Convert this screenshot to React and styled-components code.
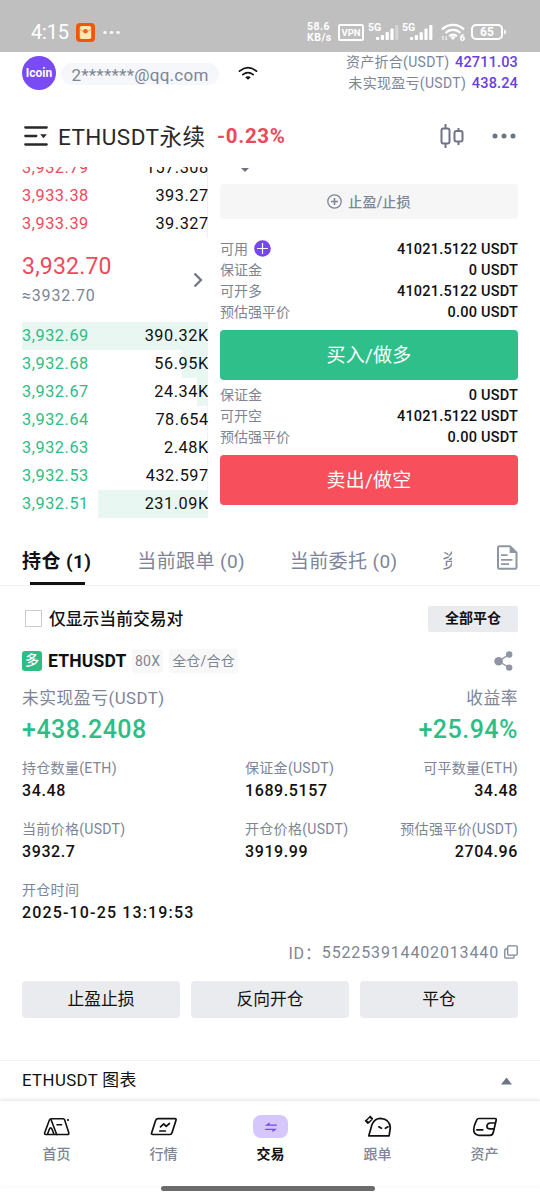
import React from "react";
import styled, { createGlobalStyle, css } from "styled-components";

const asks = [
	{ price: "3,932.79", amount: "157.308", depth: 0.5 },
	{ price: "3,933.38", amount: "393.27", depth: 0.5 },
	{ price: "3,933.39", amount: "39.327", depth: 0.5 },
];

const bids = [
	{ price: "3,932.69", amount: "390.32K", depth: 100 },
	{ price: "3,932.68", amount: "56.95K", depth: 14 },
	{ price: "3,932.67", amount: "24.34K", depth: 6 },
	{ price: "3,932.64", amount: "78.654", depth: 0.5 },
	{ price: "3,932.63", amount: "2.48K", depth: 0.7 },
	{ price: "3,932.53", amount: "432.597", depth: 0.5 },
	{ price: "3,932.51", amount: "231.09K", depth: 59 },
];

const details = [
	["持仓数量(ETH)", "34.48"],
	["保证金(USDT)", "1689.5157"],
	["可平数量(ETH)", "34.48"],
	["当前价格(USDT)", "3932.7"],
	["开仓价格(USDT)", "3919.99"],
	["预估强平价(USDT)", "2704.96"],
	["开仓时间", "2025-10-25 13:19:53"],
];

const Signal = ({ weak }) => (
	<svg width="23" height="17" viewBox="0 0 23 17" fill="#fff">
		<rect x="0" y="13" width="3.2" height="3" rx="1" />
		<rect x="4.8" y="11" width="3.2" height="5" rx="1" />
		<rect x="9.6" y="8" width="3.2" height="8" rx="1" />
		<rect x="14.4" y="4.500" width="3.2" height="11.500" rx="1" />
		<rect x="19.2" y="1" width="3.2" height="15" rx="1" opacity={weak ? 0.35 : 1} />
	</svg>
);

const PacketIcon = () => (
	<svg width="19" height="19" viewBox="0 0 19 19">
		<rect width="19" height="19" rx="4" fill="#f0560e" />
		<rect x="3.800" y="3" width="11.400" height="13" rx="1.8" fill="#ffe9b0" />
		<path d="M4 6.5q5.500 4 11 0" fill="none" stroke="#f0a050" strokeWidth="1" />
		<circle cx="9.500" cy="8.300" r="2.300" fill="#e8622a" />
	</svg>
);

const StatusWifi = () => (
	<svg width="24" height="20" viewBox="0 0 24 20" fill="none" stroke="#fff" strokeWidth="2.2">
		<path d="M1 7.500a15.500 15.500 0 0 1 22 0" />
		<path d="M4.500 11a10.500 10.500 0 0 1 15 0" />
		<path d="M8 14.300a5.700 5.700 0 0 1 8 0" />
		<path d="M9.300 15.200a4 4 0 0 1 5.400 0L12 18z" fill="#fff" stroke="none" />
		<path d="M2 14v4M.8 15.200L2 14M5 14v4M5 18l1.200-1.200" strokeWidth=".9" />
	</svg>
);

const HeaderWifi = () => (
	<svg width="20" height="15" viewBox="0 0 20 15" fill="none" stroke="#111" strokeLinecap="round">
		<path d="M1.500 5.200q8.500-7 17 0" strokeWidth="1.700" />
		<path d="M4.800 8.700q5.200-4 10.400 0" strokeWidth="1.700" />
		<path d="M7.200 11.200q2.800-1.900 5.600 0L10 13.800z" fill="#111" stroke="none" />
	</svg>
);

const ListIcon = () => (
	<svg width="24" height="20" viewBox="0 0 24 20" stroke="#292929" strokeWidth="2.300" strokeLinecap="round">
		<path d="M1.300 1.500h21.400M1.300 10h11M1.300 18.500h21.400" />
		<path d="M16.200 8.200h6.600L19.500 12.200z" fill="#292929" stroke="none" />
	</svg>
);

const CandleIcon = () => (
	<svg width="24" height="26" viewBox="0 0 24 26" fill="none" stroke="#6d7486" strokeWidth="2">
		<rect x="1.500" y="5.500" width="8" height="15" rx="2" />
		<rect x="14.500" y="8" width="8" height="10.500" rx="2" />
		<path d="M5.500 1v4.500M5.500 20.500V25M18.500 5v3M18.500 18.500V22" />
	</svg>
);

const DotsIcon = () => (
	<svg width="26" height="6" viewBox="0 0 26 6" fill="#6d7486">
		<circle cx="3" cy="3" r="2.500" />
		<circle cx="12" cy="3" r="2.500" />
		<circle cx="21" cy="3" r="2.500" />
	</svg>
);

const Chevron = () => (
	<svg width="10" height="16" viewBox="0 0 10 16" fill="none" stroke="#6d7486" strokeWidth="2.200">
		<path d="M1.500 1.500L8 8l-6.500 6.500" />
	</svg>
);

const Plus = () => (
	<svg width="15" height="15" viewBox="0 0 15 15" fill="none" stroke="#7d8596" strokeWidth="1.300">
		<circle cx="7.500" cy="7.500" r="6.700" />
		<path d="M7.500 4v7M4 7.500h7" strokeWidth="1.600" />
	</svg>
);

const PlusFilled = () => (
	<svg width="17" height="17" viewBox="0 0 17 17">
		<circle cx="8.500" cy="8.500" r="8.300" fill="#7447f0" />
		<path d="M8.500 3v11M3 8.500h11" stroke="#fff" strokeWidth="1.200" />
	</svg>
);

const FileIcon = () => (
	<svg width="22" height="25" viewBox="0 0 22 25" fill="none" stroke="#8f95a3" strokeWidth="2" strokeLinejoin="round">
		<path d="M3.500 1.200h10.500L20.500 7.700v14.800q0 1.300-1.300 1.300H3.500q-1.500 0-1.500-1.300V2.700Q2 1.200 3.500 1.200z" />
		<path d="M13.700 1.500v6.500h6.500z" fill="#8f95a3" stroke="none" />
		<path d="M5 10.200h6.500M5 14.800h11.500M5 19.200h8" strokeWidth="1.700" />
	</svg>
);

const ShareIcon = () => (
	<svg width="19" height="20" viewBox="0 0 19 20" fill="#8f95a3" stroke="#8f95a3">
		<path d="M15 3.500L4.500 10.300 15 16.500" fill="none" strokeWidth="1.400" />
		<circle cx="4.600" cy="10.200" r="4.300" stroke="none" />
		<circle cx="15.200" cy="3.500" r="3.200" stroke="none" />
		<circle cx="15.200" cy="16.600" r="3.200" stroke="none" />
	</svg>
);

const CopyIcon = () => (
	<svg width="14" height="14" viewBox="0 0 14 14" fill="none" stroke="#7d8596" strokeWidth="1.300">
		<rect x="3.700" y=".8" width="9.500" height="9.300" rx="1" />
		<path d="M3.500 4H1.800q-1 0-1 1v7.200q0 1 1 1H9q1 0 1-1V10.500" />
	</svg>
);

const HomeIcon = () => (
	<svg width="28" height="20" viewBox="0 0 28 20" fill="none" stroke="#111" strokeWidth="1.600" strokeLinejoin="round" strokeLinecap="round">
		<path d="M8.300 1.700h11.700q1.200 0 1.700 1.200l4 12.700q.5 1.900-1.200 1.900H2.700q-1.500 0-1-1.700L6.400 3q.5-1.300 1.900-1.300z" />
		<path d="M8 2.500l5.700 15M4.500 17.300l1.800-5q1.400-2.800 2.800 0l1.800 5M14 7.800h4.500" />
		<circle cx="25" cy="3" r="1.100" fill="#111" stroke="none" />
	</svg>
);

const MarketIcon = () => (
	<svg width="28" height="20" viewBox="0 0 28 20" fill="none" stroke="#111" strokeWidth="1.700" strokeLinejoin="round" strokeLinecap="round">
		<path d="M8.300 1.700h16.500q1.700 0 1.200 1.600l-4 12.500q-.5 1.700-2 1.700H2.700q-1.600 0-1.100-1.600L5.600 3.500q.7-1.800 2.700-1.800z" />
		<path d="M10.500 9.800l3.200-3 2.500 2.500 3.200-2.800M9.800 14h5.500" />
	</svg>
);

const TradeIcon = () => (
	<svg width="16" height="14" viewBox="0 0 16 14" fill="#7447f0">
		<path d="M2 5.800L6.500 2.200v2.200h7.300v1.400z" />
		<path d="M14 8.700L9.500 12.300V10.100H2.200V8.700z" />
	</svg>
);

const CopyTradeIcon = () => (
	<svg width="28" height="23" viewBox="0 0 28 23" fill="none" stroke="#111" strokeWidth="1.700" strokeLinejoin="round" strokeLinecap="round">
		<path d="M4.800 20.800L8 9.500Q10.500 3.300 16.500 3.300q9.500.6 9.800 9.700l-1.200 7.800z" />
		<path d="M14.800 11.800l2.600 1.500M24 11.800l-2.600 1.500" />
		<path d="M2.300 5.200L5.800 2l2.300 2.200L4.700 7.800zM6 1.200l2.300 2.300M1.500 5.800l2.300 2.400" strokeWidth="1.400" />
	</svg>
);

const WalletIcon = () => (
	<svg width="26" height="20" viewBox="0 0 26 20" fill="none" stroke="#111" strokeWidth="1.700" strokeLinejoin="round" strokeLinecap="round">
		<path d="M7 1.500h16q1.400 0 1.200 1.500l-2.800 12q-.8 3.300-3.300 3.300H6.500Q1.500 17 1.700 12.500 2 8.500 4.500 3.300 5.300 1.500 7 1.500z" />
		<path d="M23.300 6h-5q-3 .3-3.400 3 0 2.700 2.500 2.800h4.500M4.800 12.800h6" />
	</svg>
);

const nav = [
	{ label: "首页", icon: <HomeIcon /> },
	{ label: "行情", icon: <MarketIcon /> },
	{ label: "交易", icon: <TradeIcon />, active: true },
	{ label: "跟单", icon: <CopyTradeIcon /> },
	{ label: "资产", icon: <WalletIcon /> },
];

const BookRow = ({ price, amount, depth, side }) => (
	<Level>
		<Depth $side={side} style={{ width: `${depth}%` }} />
		<Price $side={side}>{price}</Price>
		<Amount>{amount}</Amount>
	</Level>
);

const Info = ({ label, value, extra }) => (
	<InfoRow>
		<InfoLabel>
			<span>{label}</span>
			{extra}
		</InfoLabel>
		<InfoValue>{value}</InfoValue>
	</InfoRow>
);

const App = () => {
	return (
		<Screen>
			<GlobalStyle />
			<StatusBar>
				<Clock>4:15</Clock>
				<PacketIcon />
				<More>···</More>
				<Speed>
					<span>58.6</span>
					<span>KB/s</span>
				</Speed>
				<Vpn>VPN</Vpn>
				<Network>
					<Gen>5G</Gen>
					<Signal weak />
				</Network>
				<Network>
					<Gen>5G</Gen>
					<Signal />
				</Network>
				<WifiBox>
					<StatusWifi />
					<WifiGen>6</WifiGen>
				</WifiBox>
				<Battery>65</Battery>
			</StatusBar>

			<Account>
				<Avatar>Icoin</Avatar>
				<Email>2*******@qq.com</Email>
				<HeaderWifi />
				<Balances>
					<div>
						资产折合(USDT) <b>42711.03</b>
					</div>
					<div>
						未实现盈亏(USDT) <b>438.24</b>
					</div>
				</Balances>
			</Account>

			<PairBar>
				<ListIcon />
				<PairName>ETHUSDT永续</PairName>
				<Change>-0.23%</Change>
				<PairActions>
					<CandleIcon />
					<DotsIcon />
				</PairActions>
			</PairBar>

			<Trade>
				<Book>
					{asks.map((row) => (
						<BookRow key={row.price} side="sell" {...row} />
					))}
					<LastPrice>
						<div>
							<Last>3,932.70</Last>
							<Approx>≈3932.70</Approx>
						</div>
						<Chevron />
					</LastPrice>
					{bids.map((row) => (
						<BookRow key={row.price} side="buy" {...row} />
					))}
				</Book>
				<Form>
					<CaretDown />
					<StopButton>
						<Plus />
						<span>止盈/止损</span>
					</StopButton>
					<Info label="可用" value="41021.5122 USDT" extra={<PlusFilled />} />
					<Info label="保证金" value="0 USDT" />
					<Info label="可开多" value="41021.5122 USDT" />
					<Info label="预估强平价" value="0.00 USDT" />
					<OrderButton $side="buy">买入/做多</OrderButton>
					<Info label="保证金" value="0 USDT" />
					<Info label="可开空" value="41021.5122 USDT" />
					<Info label="预估强平价" value="0.00 USDT" />
					<OrderButton $side="sell">卖出/做空</OrderButton>
				</Form>
			</Trade>

			<Tabs>
				<TabList>
					<Tab $active>持仓 (1)</Tab>
					<Tab>当前跟单 (0)</Tab>
					<Tab>当前委托 (0)</Tab>
					<Tab>资产</Tab>
				</TabList>
				<FileIcon />
			</Tabs>

			<Filter>
				<Checkbox />
				<FilterText>仅显示当前交易对</FilterText>
				<CloseAll>全部平仓</CloseAll>
			</Filter>

			<Position>
				<PositionHead>
					<SideBadge>多</SideBadge>
					<Symbol>ETHUSDT</Symbol>
					<Tag>80X</Tag>
					<Tag>全仓/合仓</Tag>
					<ShareIcon />
				</PositionHead>
				<Profit>
					<div>
						<ProfitLabel>未实现盈亏(USDT)</ProfitLabel>
						<ProfitValue>+438.2408</ProfitValue>
					</div>
					<div>
						<ProfitLabel>收益率</ProfitLabel>
						<ProfitValue>+25.94%</ProfitValue>
					</div>
				</Profit>
				<Details>
					{details.map(([label, value]) => (
						<Detail key={label} $wide={value.length > 12}>
							<dt>{label}</dt>
							<dd>{value}</dd>
						</Detail>
					))}
				</Details>
				<OrderId>
					ID：<span>552253914402013440</span>
					<CopyIcon />
				</OrderId>
				<Actions>
					<Action>止盈止损</Action>
					<Action>反向开仓</Action>
					<Action>平仓</Action>
				</Actions>
			</Position>

			<ChartBar>
				<span>ETHUSDT 图表</span>
				<CaretUp />
			</ChartBar>

			<Nav>
				{nav.map((item) => (
					<NavItem key={item.label} $active={item.active}>
						<NavIcon $active={item.active}>{item.icon}</NavIcon>
						{item.label}
					</NavItem>
				))}
			</Nav>
			<HomeIndicator />
		</Screen>
	);
};

const GlobalStyle = createGlobalStyle`
	* {
		box-sizing: border-box;
	}

	body {
		margin: 0;
		background: #fff;
		font-family: Roboto, "Noto Sans CJK SC", sans-serif;
	}

	button {
		font-family: inherit;
		border: none;
		padding: 0;
	}

	svg {
		flex: none;
		display: block;
	}
`;

const gray = "#7d8596";
const green = "#2ebd85";

const Screen = styled.div`
	width: 540px;
	height: 1200px;
	overflow: hidden;
	display: flex;
	flex-direction: column;
	color: #111;
	white-space: nowrap;

	> * {
		flex: none;
	}
`;

const StatusBar = styled.div`
	height: 52px;
	background: #bfbfbf;
	color: #fff;
	display: flex;
	align-items: center;
	padding: 12px 37px 0 31px;
`;

const Clock = styled.div`
	font-size: 20px;
	width: 45px;
	letter-spacing: -0.2px;
`;

const More = styled.div`
	font-size: 20px;
	font-weight: 700;
	margin-left: 7px;
	letter-spacing: 0.5px;
`;

const Speed = styled.div`
	margin-left: auto;
	margin-right: 5px;
	width: 26px;
	font-size: 10.5px;
	font-weight: 700;
	line-height: 11px;
	letter-spacing: 0.5px;
	display: flex;
	flex-direction: column;
	gap: 0.5px;
`;

const Vpn = styled.div`
	width: 26px;
	height: 17px;
	border: 2px solid #fff;
	border-radius: 2px;
	font-size: 9.5px;
	font-weight: 700;
	line-height: 13px;
	text-align: center;
	margin-right: 4px;
`;

const Network = styled.div`
	width: 31px;
	height: 17px;
	margin-right: 3px;
	display: flex;
	justify-content: flex-end;
	position: relative;
`;

const Gen = styled.span`
	position: absolute;
	left: 0;
	top: -2px;
	font-size: 10.5px;
	font-weight: 700;
	line-height: 11px;
`;

const WifiBox = styled.div`
	margin: 0 6px 0 5px;
	position: relative;
`;

const WifiGen = styled.span`
	position: absolute;
	right: 0;
	bottom: -1px;
	font-size: 9px;
	font-weight: 900;
	line-height: 9px;
`;

const Battery = styled.div`
	width: 32px;
	height: 16px;
	border: 2px solid #fff;
	border-radius: 5px;
	font-size: 12px;
	font-weight: 700;
	line-height: 13px;
	text-align: center;
	position: relative;

	&::after {
		content: "";
		position: absolute;
		right: -5px;
		top: 4px;
		width: 2px;
		height: 4px;
		border-radius: 1px;
		background: #fff;
	}
`;

const Account = styled.div`
	height: 56px;
	display: flex;
	align-items: flex-start;
	padding: 0 22px;

	> svg {
		margin: 14px 0 0 19px;
	}
`;

const Avatar = styled.div`
	width: 34px;
	height: 34px;
	margin-top: 4px;
	border-radius: 50%;
	background: #7a4af5;
	color: #fff;
	font-size: 12px;
	font-weight: 700;
	line-height: 34px;
	text-align: center;
`;

const Email = styled.div`
	margin: 11px 0 0 5px;
	width: 158px;
	height: 22px;
	border-radius: 11px;
	background: #f5f7fa;
	color: ${gray};
	font-size: 17px;
	line-height: 24px;
	letter-spacing: 0.25px;
	text-align: center;
`;

const Balances = styled.div`
	margin-left: auto;
	text-align: right;
	font-size: 14px;
	letter-spacing: 0.3px;
	line-height: 21px;
	color: ${gray};

	b {
		margin-left: 2px;
		font-size: 14.5px;
		font-weight: 500;
		letter-spacing: 0.15px;
		color: #6a3fe0;
	}
`;

const PairBar = styled.div`
	height: 59px;
	padding: 0 22px 3px 24px;
	display: flex;
	align-items: center;
`;

const PairName = styled.div`
	margin: -3px 0 0 10px;
	width: 159px;
	font-size: 22.5px;
	letter-spacing: 0.45px;
	color: #292929;
`;

const Change = styled.div`
	font-size: 20.5px;
	font-weight: 700;
	letter-spacing: 0.7px;
	color: #e94a5c;
`;

const PairActions = styled.div`
	margin-left: auto;
	display: flex;
	align-items: center;
	gap: 28px;
`;

const Trade = styled.div`
	height: 368px;
	overflow: hidden;
	padding: 0 22px;
	display: flex;
	gap: 12px;
`;

const Book = styled.div`
	width: 186px;
	margin-top: -13px;
`;

const Level = styled.div`
	height: 28px;
	line-height: 28px;
	display: flex;
	justify-content: space-between;
	font-size: 16.3px;
	letter-spacing: 0.55px;
	position: relative;
`;

const Depth = styled.div`
	position: absolute;
	right: 0;
	top: 0;
	bottom: 0;
	background: ${(p) => (p.$side === "buy" ? "#e8f7f1" : "#fde8ea")};
`;

const Price = styled.span`
	position: relative;
	color: ${(p) => (p.$side === "buy" ? green : "#ee4a5d")};
`;

const Amount = styled.span`
	position: relative;
	margin-right: -0.75px;
`;

const LastPrice = styled.div`
	height: 84px;
	display: flex;
	align-items: center;
	justify-content: space-between;
	padding-right: 5px;
`;

const Last = styled.div`
	font-size: 23px;
	line-height: 32px;
	letter-spacing: 0.2px;
	color: #ee4a5d;
`;

const Approx = styled.div`
	font-size: 16px;
	line-height: 26px;
	letter-spacing: 0.8px;
	color: ${gray};
`;

const Form = styled.div`
	width: 298px;
`;

const CaretDown = styled.div`
	margin: 1px 0 12px 21px;
	width: 8px;
	height: 4px;
	background: #6d7486;
	clip-path: polygon(0 0, 100% 0, 50% 100%);
`;

const StopButton = styled.button`
	width: 100%;
	height: 35px;
	margin-bottom: 19px;
	border-radius: 4px;
	background: #f6f6f7;
	color: ${gray};
	font-size: 14px;
	font-weight: 500;
	letter-spacing: 0.2px;
	display: flex;
	align-items: center;
	justify-content: center;
	gap: 6px;

	span {
		margin-top: -2px;
	}
`;

const InfoRow = styled.div`
	height: 21.2px;
	display: flex;
	align-items: center;
	justify-content: space-between;
`;

const InfoLabel = styled.div`
	display: flex;
	align-items: center;
	gap: 6px;
	font-size: 14px;
	line-height: 20px;
	color: ${gray};
`;

const InfoValue = styled.div`
	padding-top: 1px;
	font-size: 14.5px;
	font-weight: 500;
	letter-spacing: 0.2px;
`;

const OrderButton = styled.button`
	width: 100%;
	height: 50px;
	margin: 7px 0 4.5px;
	padding-bottom: 3px;
	border-radius: 4px;
	background: ${(p) => (p.$side === "buy" ? "#2fbf8a" : "#f84f5d")};
	color: #fff;
	font-size: 19px;
	letter-spacing: 0.2px;
	display: block;
`;

const Tabs = styled.div`
	height: 51px;
	border-bottom: 1px solid #f2f2f3;
	padding: 0 22px;
	display: flex;
	justify-content: space-between;

	> svg {
		margin-top: 10px;
	}
`;

const TabList = styled.div`
	width: 430px;
	height: 51px;
	overflow: hidden;
	display: flex;
	gap: 44.8px;
`;

const Tab = styled.div`
	flex: none;
	height: 51px;
	font-size: 19px;
	line-height: 54px;
	letter-spacing: 0.4px;
	color: ${gray};
	position: relative;

	${(p) =>
		p.$active &&
		css`
			width: 70.5px;
			color: #111;
			font-weight: 700;

			&::after {
				content: "";
				position: absolute;
				left: 8px;
				bottom: 1px;
				width: 55px;
				height: 3px;
				background: #111;
			}
		`}
`;

const Filter = styled.div`
	height: 63px;
	padding: 2px 22px 0 25px;
	display: flex;
	align-items: center;
`;

const Checkbox = styled.div`
	width: 17px;
	height: 17px;
	border: 1px solid #c9ccd3;
`;

const FilterText = styled.div`
	margin: -2px 0 0 7px;
	font-size: 16.8px;
	font-weight: 500;
`;

const CloseAll = styled.button`
	margin-left: auto;
	width: 90px;
	height: 26px;
	padding-bottom: 3px;
	border-radius: 2px;
	background: #eaebee;
	color: #111;
	font-size: 14px;
	font-weight: 700;
`;

const Position = styled.div`
	height: 411px;
	padding: 0 22px;
`;

const PositionHead = styled.div`
	height: 24px;
	display: flex;
	align-items: center;
	gap: 6px;

	> svg {
		margin: 0 5px 0 auto;
	}
`;

const SideBadge = styled.div`
	width: 20px;
	height: 20px;
	border-radius: 3px;
	background: ${green};
	color: #fff;
	font-size: 14px;
	font-weight: 500;
	line-height: 19px;
	text-align: center;
`;

const Symbol = styled.div`
	width: 78px;
	font-size: 17.5px;
	font-weight: 700;
	letter-spacing: 0.2px;
`;

const Tag = styled.div`
	height: 24px;
	padding: 0 3px;
	border-radius: 3px;
	background: #f8f8f9;
	color: ${gray};
	font-size: 14px;
	line-height: 24px;
	letter-spacing: 0.2px;
`;

const Profit = styled.div`
	margin-top: 9px;
	display: flex;
	justify-content: space-between;

	> :last-child {
		text-align: right;
	}
`;

const ProfitLabel = styled.div`
	font-size: 16.8px;
	line-height: 32px;
	letter-spacing: 0.5px;
	color: ${gray};
`;

const ProfitValue = styled.div`
	font-size: 25px;
	font-weight: 500;
	line-height: 31px;
	letter-spacing: 0.5px;
	color: ${green};
`;

const Details = styled.div`
	margin-top: 13px;
	display: grid;
	grid-template-columns: 223px 136px 137px;
	row-gap: 17px;
`;

const Detail = styled.dl`
	margin: 0;

	&:nth-child(3n) {
		text-align: right;
	}

	dt {
		font-size: 14px;
		line-height: 21px;
		letter-spacing: 0.3px;
		color: ${gray};
	}

	dd {
		margin: 0;
		font-size: 16px;
		font-weight: 500;
		line-height: 23px;
		letter-spacing: ${(p) => (p.$wide ? "1.15px" : "0.6px")};
	}
`;

const OrderId = styled.div`
	height: 24px;
	margin-top: 16px;
	display: flex;
	align-items: center;
	justify-content: flex-end;
	font-size: 16px;
	letter-spacing: 0.85px;
	color: ${gray};

	svg {
		margin-left: 5px;
	}
`;

const Actions = styled.div`
	margin-top: 17px;
	display: grid;
	grid-template-columns: repeat(3, 1fr);
	gap: 11px;
`;

const Action = styled.button`
	height: 37px;
	padding-bottom: 4px;
	border-radius: 4px;
	background: #eaebee;
	color: #111;
	font-size: 16.8px;
`;

const ChartBar = styled.div`
	height: 41px;
	padding: 0 28px 0 22px;
	border-top: 1px solid #f2f2f3;
	display: flex;
	align-items: center;
	justify-content: space-between;
	font-size: 16.8px;
	letter-spacing: 0.4px;

	span {
		margin-top: -5px;
	}
`;

const CaretUp = styled.div`
	width: 11px;
	height: 7px;
	background: #6d7486;
	clip-path: polygon(50% 0, 100% 100%, 0 100%);
`;

const Nav = styled.div`
	height: 85px;
	padding: 14px 2px 0 3px;
	background: #fff;
	box-shadow: 0 -1px 4px rgba(0, 0, 0, 0.12);
	display: grid;
	grid-template-columns: repeat(5, 1fr);
`;

const NavItem = styled.div`
	display: flex;
	flex-direction: column;
	align-items: center;
	gap: 6px;
	font-size: 14px;
	font-weight: ${(p) => (p.$active ? 700 : 500)};
	line-height: 20px;
	color: ${(p) => (p.$active ? "#111" : gray)};
`;

const NavIcon = styled.div`
	width: 35px;
	height: 23px;
	border-radius: 8px;
	background: ${(p) => (p.$active ? "#d5c7fb" : "none")};
	display: flex;
	align-items: center;
	justify-content: center;
`;

const HomeIndicator = styled.div`
	width: 214px;
	height: 5px;
	margin-left: 161px;
	border-radius: 3px;
	background: #6b6b6b;
`;

export default App;
